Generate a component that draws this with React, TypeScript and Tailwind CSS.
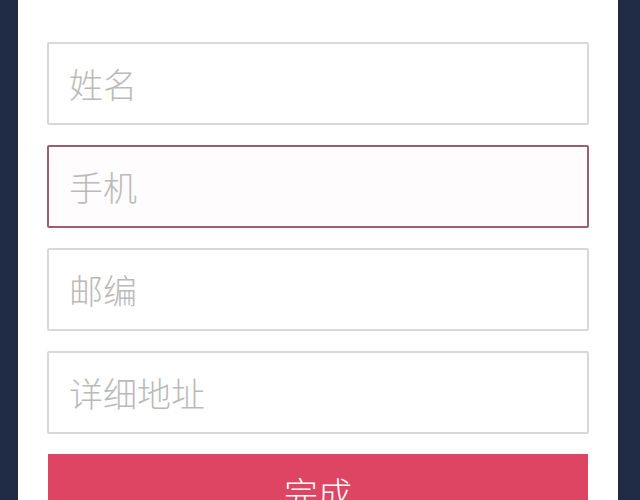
import React from 'react'

const fields = ['姓名', '手机', '邮编', '详细地址']

export default function App() {
  return (
    <div className="h-[500px] w-[640px] overflow-hidden bg-[#202c45] font-['Liberation_Sans','Noto_Sans_CJK_SC',sans-serif]">
      <div className="ml-[18px] h-full w-[600px] bg-white px-[29px] pt-[42px]">
        <div className="flex flex-col gap-[20px]">
          {fields.map((f, i) => (
            <input
              key={f}
              placeholder={f}
              className={
                i === 1
                  ? 'h-[83px] w-full rounded-[2px] border-2 border-[#9c5f6f] bg-[#fffcfd] px-[20px] pt-[6px] text-[34px] font-light text-gray-700 outline-none placeholder:text-[#bababa]'
                  : 'h-[83px] w-full rounded-[2px] border-2 border-[#d8d8d8] bg-white px-[20px] pt-[6px] text-[34px] font-light text-gray-700 outline-none placeholder:text-[#bababa]'
              }
            />
          ))}
          <button className="mx-px h-[82px] bg-[#dd4562] text-[34px] font-light text-white">
            完成
          </button>
        </div>
      </div>
    </div>
  )
}
